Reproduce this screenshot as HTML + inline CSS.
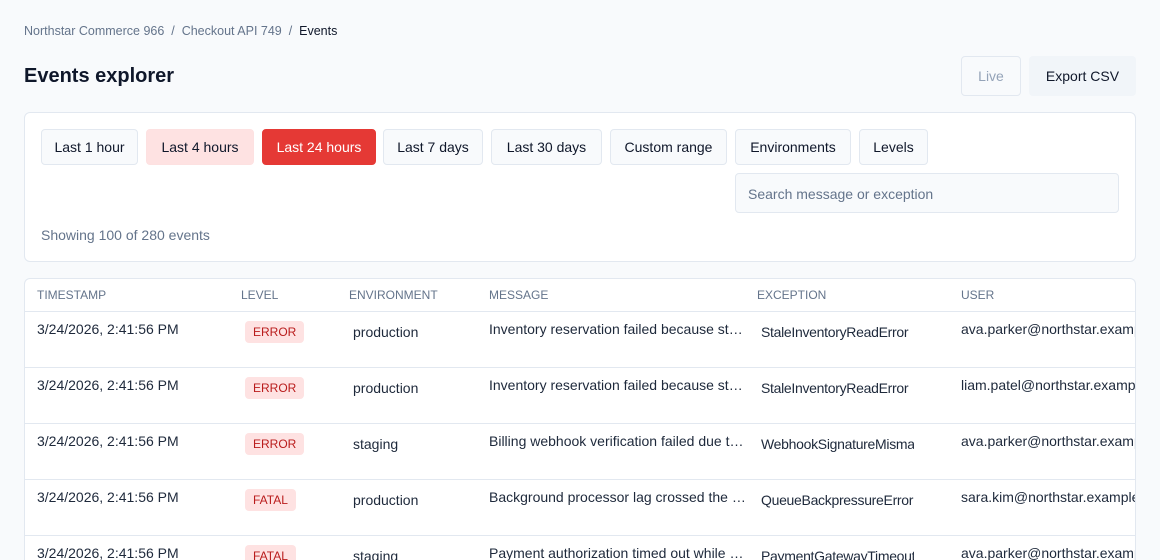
<!DOCTYPE html>
<html><head><meta charset="utf-8"><style>
*{box-sizing:border-box;margin:0;padding:0}
html,body{width:1160px;height:560px;overflow:hidden}
body{background:#f8fafc;font-family:"Liberation Sans",sans-serif;color:#0f172a;position:relative}
.a{position:absolute;white-space:nowrap}
.bc{top:24px;left:24px;font-size:12.5px;color:#64748b}
.bc b{font-weight:normal;color:#0f172a}
h1{position:absolute;left:24px;top:65px;font-size:20px;font-weight:bold;color:#0f172a}
.btn{position:absolute;height:40px;border-radius:4px;font-size:14px;display:flex;align-items:center;justify-content:center}
.card{position:absolute;left:24px;top:112px;width:1112px;height:150px;background:#fff;border:1px solid #e2e8f0;border-radius:6px}
.chip{position:absolute;top:16px;height:36px;border:1px solid #e2e8f0;background:#f8fafc;border-radius:4px;font-size:14px;display:flex;align-items:center;justify-content:center;color:#0f172a}
.tbl{position:absolute;left:24px;top:278px;width:1112px;height:282px;background:#fff;border:1px solid #e2e8f0;border-bottom:none;border-radius:6px 6px 0 0;overflow:hidden}
.th{position:absolute;top:9px;font-size:12px;color:#64748b}
.row{position:absolute;left:0;width:1112px;height:56px;border-top:1px solid #e2e8f0;font-size:14px;color:#1e293b}
.c{position:absolute;white-space:nowrap;overflow:hidden}
.ex{letter-spacing:-0.3px}
.bd{position:absolute;top:9px;left:220px;height:22px;padding:0 8px;background:#fee2e2;color:#b91c1c;border-radius:4px;font-size:12px;line-height:22px}
</style></head><body>
<div class="a bc">Northstar Commerce 966 &nbsp;/&nbsp; Checkout API 749 &nbsp;/&nbsp; <b>Events</b></div>
<h1>Events explorer</h1>
<div class="btn" style="left:961px;top:56px;width:60px;border:1px solid #e2e8f0;color:#94a3b8">Live</div>
<div class="btn" style="left:1029px;top:56px;width:107px;background:#f1f5f9;color:#0f172a">Export CSV</div>
<div class="card">
<div class="chip" style="left:16px;width:97px">Last 1 hour</div>
<div class="chip" style="left:121px;width:108px;background:#fee2e2;border-color:#fde1e1">Last 4 hours</div>
<div class="chip" style="left:237px;width:114px;background:#e53935;border-color:#e53935;color:#fff">Last 24 hours</div>
<div class="chip" style="left:358px;width:100px">Last 7 days</div>
<div class="chip" style="left:466px;width:111px">Last 30 days</div>
<div class="chip" style="left:585px;width:117px">Custom range</div>
<div class="chip" style="left:710px;width:116px">Environments</div>
<div class="chip" style="left:834px;width:69px">Levels</div>
<div class="a" style="left:710px;top:60px;width:384px;height:40px;border:1px solid #e2e8f0;background:#f8fafc;border-radius:4px;font-size:14px;color:#64748b;padding:12px 12px">Search message or exception</div>
<div class="a" style="left:16px;top:114px;font-size:14px;color:#64748b">Showing 100 of 280 events</div>
</div>
<div class="tbl">
<div class="th" style="left:12px">TIMESTAMP</div>
<div class="th" style="left:216px">LEVEL</div>
<div class="th" style="left:324px">ENVIRONMENT</div>
<div class="th" style="left:464px">MESSAGE</div>
<div class="th" style="left:732px">EXCEPTION</div>
<div class="th" style="left:936px">USER</div>

<div class="row" style="top:32px">
<div class="c" style="left:12px;top:9px">3/24/2026, 2:41:56 PM</div><div class="bd">ERROR</div>
<div class="c" style="left:328px;top:12px">production</div>
<div class="c" style="left:464px;top:9px;width:257px;text-overflow:ellipsis">Inventory reservation failed because stock snapshot was stale</div>
<div class="c ex" style="left:736px;top:12px;width:153px">StaleInventoryReadError</div>
<div class="c" style="left:936px;top:9px">ava.parker@northstar.example</div></div>

<div class="row" style="top:88px">
<div class="c" style="left:12px;top:9px">3/24/2026, 2:41:56 PM</div><div class="bd">ERROR</div>
<div class="c" style="left:328px;top:12px">production</div>
<div class="c" style="left:464px;top:9px;width:257px;text-overflow:ellipsis">Inventory reservation failed because stock snapshot was stale</div>
<div class="c ex" style="left:736px;top:12px;width:153px">StaleInventoryReadError</div>
<div class="c" style="left:936px;top:9px">liam.patel@northstar.example</div></div>

<div class="row" style="top:144px">
<div class="c" style="left:12px;top:9px">3/24/2026, 2:41:56 PM</div><div class="bd">ERROR</div>
<div class="c" style="left:328px;top:12px">staging</div>
<div class="c" style="left:464px;top:9px;width:257px;text-overflow:ellipsis">Billing webhook verification failed due to signature mismatch</div>
<div class="c ex" style="left:736px;top:12px;width:153px">WebhookSignatureMismatchError</div>
<div class="c" style="left:936px;top:9px">ava.parker@northstar.example</div></div>

<div class="row" style="top:200px">
<div class="c" style="left:12px;top:9px">3/24/2026, 2:41:56 PM</div><div class="bd">FATAL</div>
<div class="c" style="left:328px;top:12px">production</div>
<div class="c" style="left:464px;top:9px;width:257px;text-overflow:ellipsis">Background processor lag crossed the threshold</div>
<div class="c ex" style="left:736px;top:12px;width:153px">QueueBackpressureError</div>
<div class="c" style="left:936px;top:9px">sara.kim@northstar.example</div></div>

<div class="row" style="top:256px;height:26px">
<div class="c" style="left:12px;top:9px">3/24/2026, 2:41:56 PM</div><div class="bd">FATAL</div>
<div class="c" style="left:328px;top:12px">staging</div>
<div class="c" style="left:464px;top:9px;width:257px;text-overflow:ellipsis">Payment authorization timed out while waiting</div>
<div class="c ex" style="left:736px;top:12px;width:153px">PaymentGatewayTimeoutError</div>
<div class="c" style="left:936px;top:9px">ava.parker@northstar.example</div></div>
</div>
</body></html>
